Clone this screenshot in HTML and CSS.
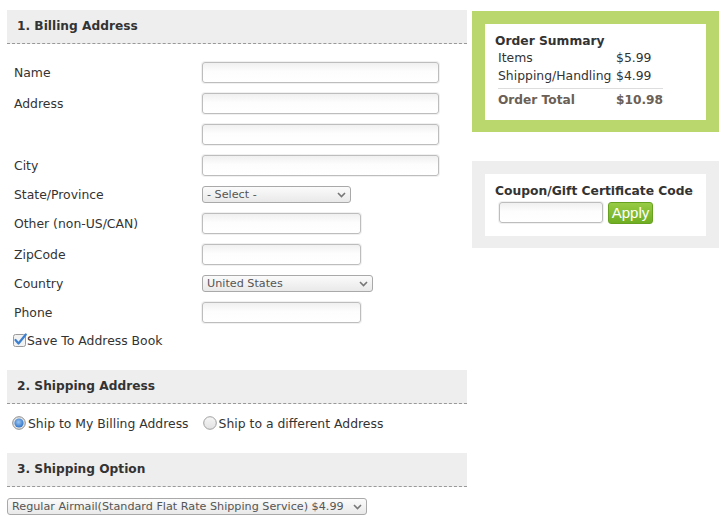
FILE: index.html
```html
<!DOCTYPE html>
<html>
<head>
<meta charset="utf-8">
<link rel="stylesheet" href="styles.css">
</head>
<body>
<div class="page">
  <div class="main">
    <div class="section-head">1. Billing Address</div>
    <div class="form">
      <label class="lbl">Name</label><input class="txt w-long" type="text">
      <label class="lbl">Address</label><input class="txt w-long" type="text">
      <span class="lbl"></span><input class="txt w-long" type="text">
      <label class="lbl">City</label><input class="txt w-long" type="text">
      <label class="lbl">State/Province</label>
      <span class="sel w-state"><span class="sel-text">- Select -</span><svg class="chev" width="9" height="6" viewBox="0 0 9 6"><path d="M1 1 L4.5 4.5 L8 1" fill="none" stroke="#777" stroke-width="1.6"/></svg></span>
      <label class="lbl">Other (non-US/CAN)</label><input class="txt w-mid" type="text">
      <label class="lbl">ZipCode</label><input class="txt w-mid" type="text">
      <label class="lbl">Country</label>
      <span class="sel w-country"><span class="sel-text">United States</span><svg class="chev" width="9" height="6" viewBox="0 0 9 6"><path d="M1 1 L4.5 4.5 L8 1" fill="none" stroke="#777" stroke-width="1.6"/></svg></span>
      <label class="lbl">Phone</label><input class="txt w-mid" type="text">
      <label class="check-row">
        <svg class="cb" width="14" height="14" viewBox="0 0 14 14"><rect x="0.5" y="1.5" width="12" height="12" rx="2" fill="#f2f2f2" stroke="#9a9a9a"/><path d="M2.5 7 L5.5 10.5 L12.8 1.5" fill="none" stroke="#3a7fd0" stroke-width="2.2" stroke-linecap="round" stroke-linejoin="round"/></svg>Save To Address Book
      </label>
    </div>

    <div class="section-head head2">2. Shipping Address</div>
    <div class="radio-row">
      <label class="radio"><svg width="14" height="14" viewBox="0 0 14 14"><defs><radialGradient id="rg" cx="0.45" cy="0.4" r="0.6"><stop offset="0" stop-color="#9cc6f2"/><stop offset="1" stop-color="#2f74c8"/></radialGradient></defs><circle cx="7" cy="7" r="6.3" fill="#e8e8e8" stroke="#8a8a8a"/><circle cx="7" cy="7" r="4.6" fill="url(#rg)"/></svg>Ship to My Billing Address</label>
      <label class="radio"><svg width="14" height="14" viewBox="0 0 14 14"><defs><linearGradient id="lg" x1="0" y1="0" x2="0" y2="1"><stop offset="0" stop-color="#f6f6f6"/><stop offset="1" stop-color="#e2e2e2"/></linearGradient></defs><circle cx="7" cy="7" r="6.3" fill="url(#lg)" stroke="#a0a0a0"/></svg>Ship to a different Address</label>
    </div>

    <div class="section-head head3">3. Shipping Option</div>
    <div class="ship-opt">
      <span class="sel w-ship"><span class="sel-text">Regular Airmail(Standard Flat Rate Shipping Service) $4.99</span><svg class="chev" width="9" height="6" viewBox="0 0 9 6"><path d="M1 1 L4.5 4.5 L8 1" fill="none" stroke="#777" stroke-width="1.6"/></svg></span>
    </div>
  </div>

  <div class="side">
    <div class="box box-green">
      <div class="box-inner">
        <div class="box-title">Order Summary</div>
        <div class="summary">
          <span>Items</span><span>$5.99</span>
          <span>Shipping/Handling</span><span>$4.99</span>
          <span class="total">Order Total</span><span class="total">$10.98</span>
        </div>
      </div>
    </div>
    <div class="box box-gray">
      <div class="box-inner coupon-inner">
        <div class="box-title">Coupon/Gift Certificate Code</div>
        <div class="coupon-row">
          <input class="txt w-coupon" type="text">
          <button class="apply" type="button">Apply</button>
        </div>
      </div>
    </div>
  </div>
</div>
</body>
</html>
```
FILE: styles.css
```css
html, body {
  margin: 0;
  padding: 0;
  background: #fff;
}
body {
  font-family: "DejaVu Sans", sans-serif;
  font-size: 12.4px;
  color: #333;
}
.page {
  display: flex;
  gap: 5px;
  padding: 10px 0 0 7px;
}
.main {
  width: 460px;
  flex: none;
}
.section-head {
  height: 33px;
  line-height: 33px;
  background: #eee;
  border-bottom: 1px dashed #999;
  padding: 0 10px;
  font-weight: bold;
  font-size: 12.2px;
  color: #333;
}
.form {
  display: grid;
  grid-template-columns: 188px auto;
  row-gap: 10px;
  align-items: center;
  justify-items: start;
  padding: 18px 0 0 7px;
}
.lbl {
  line-height: 16px;
}
.txt {
  box-sizing: border-box;
  height: 21px;
  margin: 0;
  border: 1px solid #bdbdbd;
  border-radius: 3px;
  background: linear-gradient(#f0f0f0, #fdfdfd 45%, #fff);
  box-shadow: 0 0 0 1px #f1f1f1;
  padding: 0 4px;
  font-family: "DejaVu Sans", sans-serif;
  font-size: 12px;
}
.w-long { width: 237px; }
.w-mid { width: 159px; }
.w-coupon { width: 104px; }
.sel {
  position: relative;
  box-sizing: border-box;
  display: flex;
  align-items: center;
  height: 17px;
  border: 1px solid #a9a9a9;
  border-radius: 3px;
  background: linear-gradient(#fbfbfb, #e9e9e9);
  padding: 0 18px 0 4px;
  font-size: 11.2px;
  color: #555;
  white-space: nowrap;
}
.sel-text {
  line-height: 15px;
}
.chev {
  position: absolute;
  right: 4px;
  top: 5px;
}
.w-state { width: 149px; }
.w-country { width: 171px; }
.w-ship { width: 360px; }
.check-row {
  grid-column: 1 / span 2;
  display: flex;
  align-items: center;
  height: 14px;
  margin-left: -1px;
}
.cb {
  margin-right: 0;
}
.head2 {
  margin-top: 23px;
}
.radio-row {
  display: flex;
  gap: 14px;
  padding: 11px 0 0 5px;
  height: 16px;
}
.radio {
  display: flex;
  align-items: center;
  gap: 2px;
}
.head3 {
  margin-top: 22px;
}
.ship-opt {
  padding-top: 11px;
}
.side {
  width: 247px;
  flex: none;
  padding-top: 1px;
}
.box {
  padding: 13px 13px 12px;
}
.box-green {
  background: #bad76e;
}
.box-gray {
  background: #eee;
  margin-top: 29px;
}
.box-inner {
  background: #fff;
  padding: 9px 10px 9px;
}
.box-title {
  font-weight: bold;
  font-size: 12.3px;
  line-height: 16px;
  color: #333;
}
.summary {
  display: inline-grid;
  grid-template-columns: 118px auto;
  margin-left: 3px;
  line-height: 18px;
  color: #333;
}
.summary .total {
  font-weight: bold;
  font-size: 12.2px;
  color: #6b6055;
  border-top: 1px solid #ddd;
  margin-top: 3px;
  line-height: 22px;
}
.coupon-inner {
  padding-bottom: 12px;
}
.coupon-row {
  display: flex;
  align-items: flex-start;
  gap: 5px;
  margin: 3px 0 0 4px;
}
.apply {
  box-sizing: border-box;
  height: 22px;
  width: 45px;
  margin: 0;
  padding: 0;
  border: 1px solid #66a220;
  border-radius: 3px;
  background: linear-gradient(#97cb45, #6fae22);
  color: #fff;
  font-family: "Liberation Sans", Arial, sans-serif;
  font-size: 15px;
  line-height: 20px;
}
```
